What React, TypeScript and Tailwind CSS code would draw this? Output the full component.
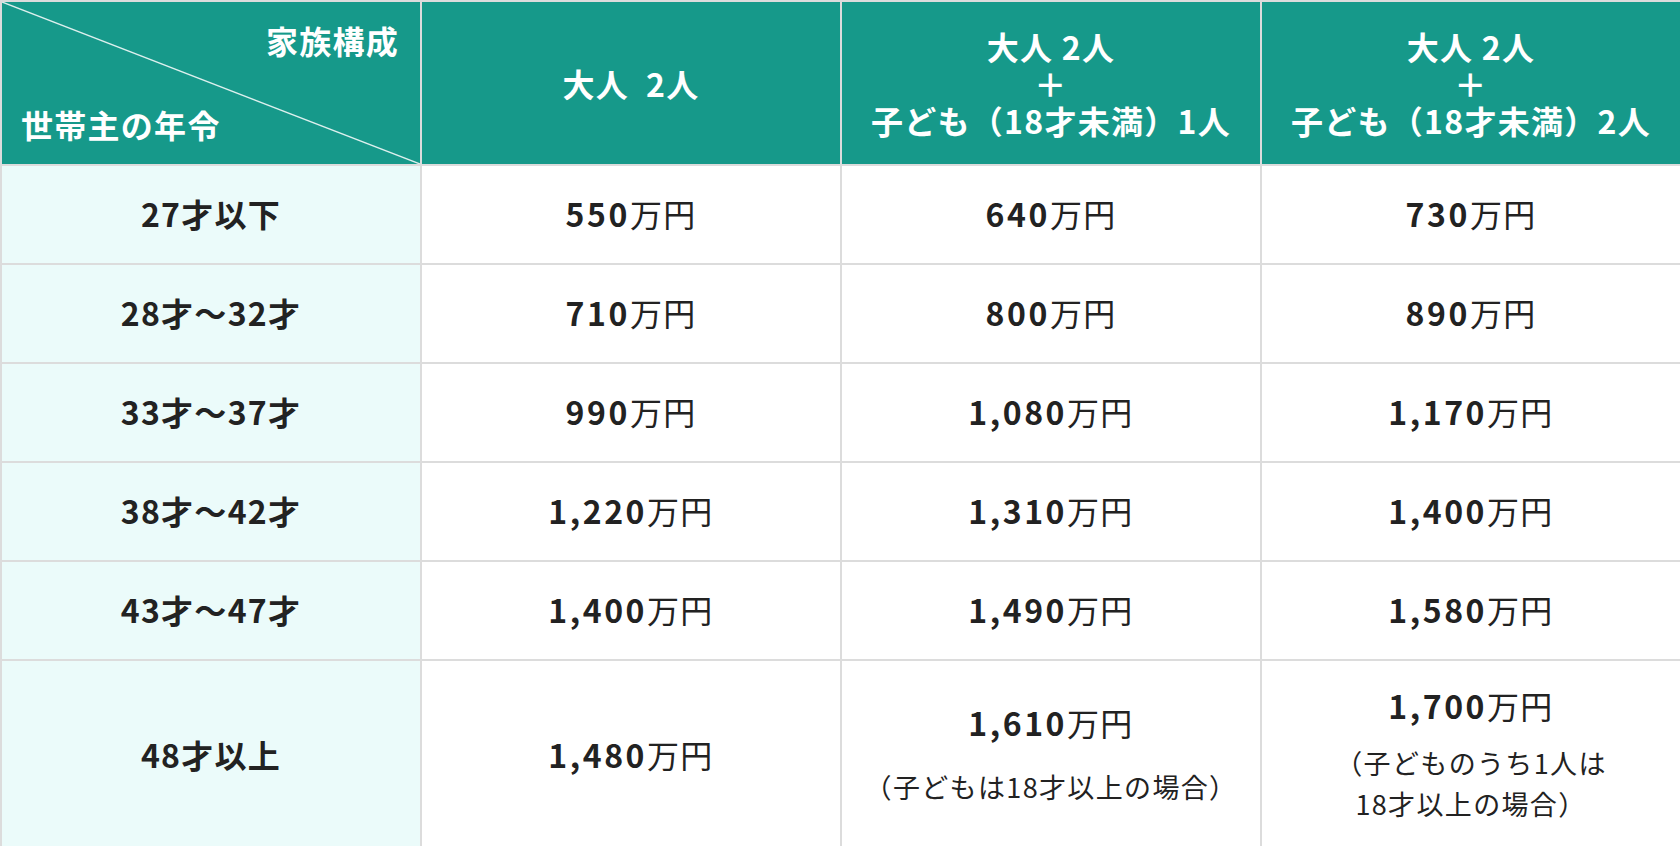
import React from "react";

const rows: { age: string; v: string[] }[] = [
  { age: "27才以下", v: ["550", "640", "730"] },
  { age: "28才～32才", v: ["710", "800", "890"] },
  { age: "33才～37才", v: ["990", "1,080", "1,170"] },
  { age: "38才～42才", v: ["1,220", "1,310", "1,400"] },
  { age: "43才～47才", v: ["1,400", "1,490", "1,580"] },
];

function Amount({ n }: { n: string }) {
  return (
    <span className="leading-[44px]">
      <span className="font-bold tracking-[0.08em]">{n}</span>
      <span className="font-normal tracking-[0.04em]">万円</span>
    </span>
  );
}

export default function App() {
  const font = { fontFamily: '"Noto Sans CJK JP", "Noto Sans", sans-serif' };
  return (
    <div className="w-[1680px] h-[846px] bg-white" style={font}>
      <table className="w-full h-full table-fixed border-collapse border-2 border-[#dcdcdc] text-[#222] text-[32px] tracking-[0.04em]">
        <colgroup>
          <col className="w-[420px]" />
          <col className="w-[420px]" />
          <col className="w-[420px]" />
          <col className="w-[420px]" />
        </colgroup>
        <thead>
          <tr className="h-[164px] bg-[#16998a] text-white font-bold">
            <th className="relative border-2 border-[#dcdcdc] p-0 align-top font-bold">
              <svg
                className="absolute inset-0 w-full h-full"
                viewBox="0 0 100 100"
                preserveAspectRatio="none"
              >
                <line x1="0" y1="0" x2="100" y2="100" stroke="rgba(255,255,255,0.85)" strokeWidth="1.4" vectorEffect="non-scaling-stroke" />
              </svg>
              <div className="relative flex flex-col h-full pl-[19px] pr-[21px]">
                <div className="text-right mt-[16px] leading-[44px]">家族構成</div>
                <div className="text-left mt-auto mb-[18px] leading-[44px]">世帯主の年令</div>
              </div>
            </th>
            <th className="border-2 border-[#dcdcdc] font-bold text-center leading-[37px]">
              大人&nbsp;&nbsp;2人
            </th>
            <th className="border-2 border-[#dcdcdc] font-bold text-center leading-[37px]">
              <div>大人 2人</div>
              <div>＋</div>
              <div>子ども（18才未満）1人</div>
            </th>
            <th className="border-2 border-[#dcdcdc] font-bold text-center leading-[37px]">
              <div>大人 2人</div>
              <div>＋</div>
              <div>子ども（18才未満）2人</div>
            </th>
          </tr>
        </thead>
        <tbody>
          {rows.map((r) => (
            <tr key={r.age} className="h-[99px]">
              <td className="border-2 border-[#dcdcdc] bg-[#ebfbfa] text-center font-bold pb-[4px]">{r.age}</td>
              {r.v.map((n, i) => (
                <td key={i} className="border-2 border-[#dcdcdc] text-center pb-[4px]">
                  <Amount n={n} />
                </td>
              ))}
            </tr>
          ))}
          <tr className="h-[187px]">
            <td className="border-2 border-[#dcdcdc] bg-[#ebfbfa] text-center font-bold">48才以上</td>
            <td className="border-2 border-[#dcdcdc] text-center">
              <Amount n="1,480" />
            </td>
            <td className="border-2 border-[#dcdcdc] text-center">
              <div className="flex flex-col items-center">
                <Amount n="1,610" />
                <div className="text-[27px] leading-[41px] mt-[22px] tracking-[0.05em]">（子どもは18才以上の場合）</div>
              </div>
            </td>
            <td className="border-2 border-[#dcdcdc] text-center">
              <div className="flex flex-col items-center">
                <Amount n="1,700" />
                <div className="text-[27px] leading-[41px] mt-[15px] tracking-[0.05em]">
                  <div>（子どものうち1人は</div>
                  <div>18才以上の場合）</div>
                </div>
              </div>
            </td>
          </tr>
        </tbody>
      </table>
    </div>
  );
}
